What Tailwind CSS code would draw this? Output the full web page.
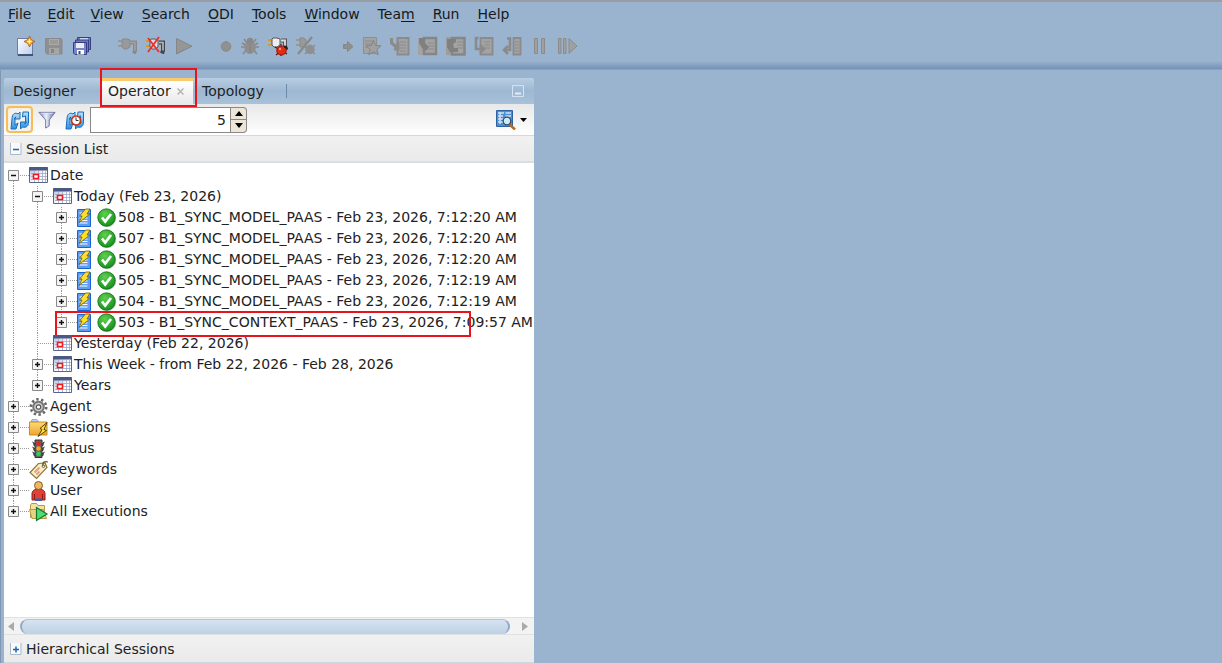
<!DOCTYPE html>
<html lang="en">
<head>
  <meta charset="UTF-8" />
  <meta name="viewport" content="width=device-width, initial-scale=1.0"/>
  <title>ODI Studio - Operator</title>
  <script src="https://cdn.jsdelivr.net/npm/@tailwindcss/browser@4"></script>
</head>
<body class="flex h-screen flex-col overflow-hidden bg-[#9ab3cf] font-['DejaVu_Sans',sans-serif] text-[14px] leading-[21px] text-[#222]">

  <!-- Icon sprites -->
  <svg class="absolute size-0" aria-hidden="true">
    <defs>
      <linearGradient id="gPage" x1="0" y1="0" x2="1" y2="1"><stop offset="0" stop-color="#fff"/><stop offset="1" stop-color="#b9cdec"/></linearGradient>
      <linearGradient id="gBlue" x1="0" y1="0" x2="0" y2="1"><stop offset="0" stop-color="#b8e2fa"/><stop offset="1" stop-color="#2f8fdd"/></linearGradient>
      <linearGradient id="gFunnel" x1="0" y1="0" x2="1" y2="0"><stop offset="0" stop-color="#7784b8"/><stop offset=".45" stop-color="#eef1fb"/><stop offset="1" stop-color="#5a68a3"/></linearGradient>
      <linearGradient id="gFolder" x1="0" y1="0" x2="0" y2="1"><stop offset="0" stop-color="#fbd97c"/><stop offset="1" stop-color="#f0a52c"/></linearGradient>
      <linearGradient id="gCalendar" x1="0" y1="0" x2="1" y2="1"><stop offset="0" stop-color="#a9b9dc"/><stop offset=".6" stop-color="#fff"/></linearGradient>
      <radialGradient id="gGreen" cx=".4" cy=".3" r=".8"><stop offset="0" stop-color="#5fd04e"/><stop offset="1" stop-color="#0c8a18"/></radialGradient>

      <symbol id="new" viewBox="0 0 20 20"><path d="M1.500 2.500h11l4 4v12.500h-15z" fill="url(#gPage)" stroke="#6d7c9f"/><path d="M2 19h15" stroke="#2b3a62" stroke-width="1.500"/><path d="M13.500 0l1.800 3.700 3.700 1.800-3.700 1.800-1.800 3.700-1.800-3.700L8 5.500l3.700-1.800z" fill="#f5a81c" stroke="#b35b0d" stroke-width=".8"/><path d="M13.500 3.200v4.600M11.200 5.500h4.600" stroke="#fff6a8" stroke-width="1.400"/></symbol>
      <symbol id="save" viewBox="0 0 20 20"><path d="M1.500 2.500h15.500l1 1v14.500H3l-1.500-1.500z" fill="#8f8f8f" stroke="#898989"/><path d="M5 3h10v6H5z" fill="#aaa"/><path d="M6 5h8M6 7h8" stroke="#8b8b8b"/><path d="M5 12h10v6H5z" fill="#a6a6a6"/><path d="M7 13h3v4H7z" fill="#858585"/></symbol>
      <symbol id="saveall" viewBox="0 0 20 20"><path d="M5.500 1.500h13v12h-13z" fill="#6f7bc0" stroke="#363f80"/><path d="M8 2h8v4H8z" fill="#cdd5f3"/><path d="M3.500 4h13v12h-13z" fill="#6f7bc0" stroke="#363f80"/><path d="M1.500 6.500h13v12H3L1.500 17z" fill="#7783cc" stroke="#363f80"/><path d="M4 7h8v5H4z" fill="#e9edfb"/><path d="M5 14h7v4.500H5z" fill="#fff"/><path d="M6.500 15h2v3h-2z" fill="#39437f"/></symbol>
      <symbol id="plug" viewBox="0 0 20 20"><path d="M0 5h5M0 10h5" stroke="#999" stroke-width="2"/><path d="M5 3h4l3 1v7l-3 2H6l-2-2V4z" fill="#999" stroke="#898989"/><path d="M12 6.500h5v8l-1 3" fill="none" stroke="#898989" stroke-width="4"/><path d="M12 6.500h5v8" fill="none" stroke="#a2a2a2" stroke-width="1.500"/></symbol>
      <symbol id="plugx" viewBox="0 0 20 20"><path d="M0 5h5M0 10h5" stroke="#d79a23" stroke-width="2"/><path d="M5 3h4l3 1v7l-3 2H6l-2-2V4z" fill="#ddd" stroke="#555"/><path d="M13 6.500h4v8l-1 3" fill="none" stroke="#444" stroke-width="4"/><path d="M13 6.500h4v8" fill="none" stroke="#bbb" stroke-width="1.600"/><path d="M2 2l11 14M13 1L2 16" stroke="#ee2c2c" stroke-width="1.800"/></symbol>
      <symbol id="play" viewBox="0 0 20 20"><path d="M2.500 2.500v15.500L18 10.200z" fill="#969696" stroke="#868686"/></symbol>
      <symbol id="dot" viewBox="0 0 20 20"><circle cx="10" cy="10.500" r="4.800" fill="#919191" stroke="#898989"/></symbol>
      <symbol id="bug" viewBox="0 0 20 20"><path d="M4 3l3 4M16 3l-3 4M1 11h18M3 18l4-5M17 18l-4-5M2 7l5 3M18 7l-5 3" stroke="#898989" stroke-width="1.600"/><ellipse cx="10" cy="11.500" rx="5.800" ry="6.500" fill="#8f8f8f"/><circle cx="10" cy="5" r="3.200" fill="#898989"/><path d="M10 8v9" stroke="#808080"/></symbol>
      <symbol id="plugbug" viewBox="0 0 20 20"><path d="M0 4h5M0 9h5" stroke="#d79a23" stroke-width="2"/><path d="M5 2h4l3 1v6l-3 2H6L4 9V3z" fill="#eee" stroke="#555"/><path d="M13 4.500h4v7" fill="none" stroke="#555" stroke-width="4"/><path d="M13 4.500h4v7" fill="none" stroke="#ddd" stroke-width="1.800"/><path d="M7 11l12 7M19 10L8 19M13 8v12" stroke="#5b1409" stroke-width="1.200"/><ellipse cx="13.500" cy="14.500" rx="4.800" ry="4.500" fill="#e62a12" stroke="#8d1707"/><circle cx="12" cy="13" r="1.200" fill="#ff9a7d"/><path d="M16 10.500a3 3 0 0 1 3 3" stroke="#222" stroke-width="2" fill="none"/></symbol>
      <symbol id="plugslash" viewBox="0 0 20 20"><path d="M0 4h4M0 9h4" stroke="#999" stroke-width="2"/><path d="M4 2h4l2 2v5l-3 2H4z" fill="#999" stroke="#898989"/><path d="M16 1L2 18" stroke="#898989" stroke-width="2.200"/><path d="M9 11l10 7M19 9L9 18" stroke="#898989" stroke-width="1.300"/><ellipse cx="14" cy="13.500" rx="4.700" ry="4.700" fill="#8f8f8f"/></symbol>
      <symbol id="arrow" viewBox="0 0 20 20"><path d="M5.500 8.500h4v-3l5.500 5-5.500 5v-3h-4z" fill="#8f8f8f" stroke="#868686"/></symbol>
      <symbol id="star" viewBox="0 0 20 20"><path d="M1.500 1.500h13v16h-13z" fill="#a3a3a3" stroke="#8f8f8f"/><path d="M3 5h9M3 8h7M3 11h5" stroke="#898989"/><path d="M11.500 4.500l2.100 5 5.400.4-4.100 3.500 1.300 5.300-4.700-2.900-4.700 2.900 1.300-5.300L4 9.900l5.400-.4z" fill="#a0a0a0" stroke="#858585"/></symbol>
      <symbol id="stepover" viewBox="0 0 20 20"><path d="M7.500 2h11v16.500h-11z" fill="#a3a3a3" stroke="#8b8b8b" stroke-width="2"/><path d="M10 6h6M10 9h6M10 12h6M10 15h6" stroke="#8b8b8b"/><path d="M1.500 2v5l5 4M8 6v7H4" fill="none" stroke="#8b8b8b" stroke-width="3"/></symbol>
      <symbol id="stepinto" viewBox="0 0 20 20"><path d="M0 2h6v17H0z" fill="#a3a3a3"/><path d="M6 2h12v16H6z" fill="#a3a3a3" stroke="#868686" stroke-width="2.500"/><path d="M10 7h6M10 10h6M10 13h6" stroke="#8b8b8b"/><path d="M1 2h6v5l4 4-3 4-4-3-3-5z" fill="#808080"/></symbol>
      <symbol id="stepout" viewBox="0 0 20 20"><path d="M0 1h6v18H0z" fill="#9d9d9d"/><path d="M6 2h12.500v16.500H6z" fill="#a3a3a3" stroke="#868686" stroke-width="2.500"/><path d="M11 6h6M11 9h6M11 12h6" stroke="#8b8b8b"/><path d="M1 3h9v3L7 8l1 4h4v4H4L1 11z" fill="#808080"/></symbol>
      <symbol id="stepend" viewBox="0 0 20 20"><path d="M6.500 2h12v16.500h-12z" fill="#a3a3a3" stroke="#8b8b8b" stroke-width="1.800"/><path d="M10 6h6M10 9h6M10 12h6" stroke="#8b8b8b"/><path d="M4.500 2H2v11h7M6 9l4 4-4 4" fill="none" stroke="#8b8b8b" stroke-width="2.600"/></symbol>
      <symbol id="stepback" viewBox="0 0 20 20"><path d="M11.500 2h7v16.500h-7z" fill="#a3a3a3" stroke="#8b8b8b" stroke-width="1.800"/><path d="M13 6h4M13 9h4M13 12h4M13 15h4" stroke="#8b8b8b"/><path d="M5 2.500h3V14H3M6 10l-4 4 4 4" fill="none" stroke="#8b8b8b" stroke-width="2.600"/></symbol>
      <symbol id="pause" viewBox="0 0 20 20"><path d="M4.500 2.500h3v15h-3zM11.500 2.500h3v15h-3z" fill="#a0a0a0" stroke="#8b8b8b"/></symbol>
      <symbol id="resume" viewBox="0 0 20 20"><path d="M.5 2.500h2.500v15H.5zM5.500 2.500H8v15H5.500zM11 2.500l8 7.500-8 7.500z" fill="#a0a0a0" stroke="#8b8b8b"/></symbol>

      <symbol id="refresh" viewBox="0 0 20 20"><path d="M2 9c0-5 3-7 6-5l2-2v7H4l2-2c-1 0-1 1-1 3v5l3-2-2 6H1z" fill="url(#gBlue)" stroke="#1a6cc0" stroke-linejoin="round"/><path d="M13 2h5.500v10c0 4-2 6-6 5l-2 2v-7h6l-2 2c1 0 1-1 1-3V6l-3 1z" fill="url(#gBlue)" stroke="#1a6cc0" stroke-linejoin="round"/></symbol>
      <symbol id="funnel" viewBox="0 0 20 20"><path d="M1 1.500h18L12.500 10v6.500l-4 2.500v-9z" fill="url(#gFunnel)" stroke="#67719f"/><path d="M3 2.500h14" stroke="#dfe4f6"/></symbol>
      <symbol id="clock" viewBox="0 0 20 20"><circle cx="11" cy="10.500" r="4.500" fill="#fff" stroke="#c5361b" stroke-width="1.700"/><path d="M11 7.500v3h2.500" fill="none" stroke="#333"/></symbol>
      <symbol id="find" viewBox="0 0 20 20"><path d="M.5.500h16v16H.5z" fill="#4f8fd0" stroke="#2d62a5"/><path d="M2 3h6M9.500 3H15M2 6h5M9.500 6H15M2 9h5M2 12h6M4 2v12" stroke="#cfe2f6" stroke-width="1.500"/><path d="M13 14l6 5.500" stroke="#b56d22" stroke-width="2.500"/><circle cx="11" cy="11" r="3.800" fill="#cdeaf8" stroke="#31506f" stroke-width="1.300"/></symbol>

      <symbol id="calendar" viewBox="0 0 20 20"><path d="M.5 1.500h18v15H.5z" fill="url(#gCalendar)" stroke="#59658f"/><path d="M.5 1h18v3.500H.5z" fill="#4c5884"/><path d="M5.500 5v11M9.500 5v11M13.500 5v11M16.500 5v11M2 7.500h16M2 10.500h16M2 13.500h16" stroke="#9aa7c8" stroke-width=".8"/><path d="M4.500 8.500h5v4h-5z" fill="#fff" stroke="#f01818" stroke-width="1.600"/></symbol>
      <symbol id="session" viewBox="0 0 20 20"><path d="M.5 1.500h13v17H.5z" fill="#5d9df5" stroke="#1762d6"/><path d="M2.500 5h6M2.500 7.500h8M2.500 10h8M2.500 12.500h8M2.500 15h8" stroke="#fff"/><path d="M8.500 1h4.500L10 6h3L2 14.500l3-6.500H2.500z" fill="#fbdf2a" stroke="#6d5a12" stroke-width=".8"/></symbol>
      <symbol id="ok" viewBox="0 0 20 20"><circle cx="10.200" cy="10.200" r="9" fill="#8d9a8d" opacity=".5"/><circle cx="9.500" cy="9.500" r="8.700" fill="url(#gGreen)" stroke="#0c7014" stroke-width=".8"/><path d="M5 9.500l3.200 4L14 6" fill="none" stroke="#fff" stroke-width="2.700"/></symbol>
      <symbol id="agent" viewBox="0 0 20 20"><circle cx="9.500" cy="10" r="7.700" fill="none" stroke="#666" stroke-width="2.600" stroke-dasharray="2.400 2.430"/><circle cx="9.500" cy="10" r="5.300" fill="#ccc" stroke="#777" stroke-width="2"/><circle cx="9.500" cy="10" r="2.200" fill="#fff" stroke="#555" stroke-width="1.200"/></symbol>
      <symbol id="sessions" viewBox="0 0 20 20"><path d="M2 3.500l1-2h5l1.500 2z" fill="#bcd3f4" stroke="#86a2cf" stroke-width=".8"/><path d="M.5 4h17.500v13H.5z" fill="url(#gFolder)" stroke="#d38a1c"/><path d="M18 4.500L11 10.500l2 1-4 7 8.500-6-2.500-1 3-7" fill="#ffe333" stroke="#3c3210" stroke-width=".9"/></symbol>
      <symbol id="status" viewBox="0 0 20 20"><path d="M3.500 3l3 2v2l-2-1M3.500 8l3 2v2l-2-1M3.500 13l3 2v2l-2-1M15.500 3l-3 2v2l2-1M15.500 8l-3 2v2l2-1M15.500 13l-3 2v2l2-1" fill="#555" stroke="#444"/><path d="M6 1h7v17.500H6z" fill="#666" stroke="#333"/><circle cx="9.500" cy="4.200" r="2.300" fill="#f02020"/><circle cx="9.500" cy="9.500" r="2.300" fill="#f7a81b"/><circle cx="9.500" cy="14.800" r="2.300" fill="#2ad15c"/></symbol>
      <symbol id="keywords" viewBox="0 0 20 20"><path d="M9.500 3.500L16 3l2 4.500L7.500 18.500 1 12.500z" fill="#f8edc8" stroke="#8b7636" stroke-width="1.200"/><path d="M5.500 12.500l5-5M7.500 14.500l3-3" stroke="#ef9c86" stroke-width="2"/><circle cx="14.500" cy="6.200" r="1.300" fill="#fff" stroke="#6d5c2a"/><path d="M14 6c-1-4 2-5 5-4" fill="none" stroke="#6b5a2b" stroke-width="1.200"/></symbol>
      <symbol id="user" viewBox="0 0 20 20"><path d="M3 19v-6c0-3 2-5 6.500-5s6.500 2 6.500 5v6z" fill="#e23f36" stroke="#8c1b16"/><path d="M5.500 13v5.500M13.500 13v5.500" stroke="#8c1b16"/><path d="M6 17.500h7V20H6z" fill="#3660a8"/><circle cx="9.500" cy="4.500" r="4" fill="#e9b964" stroke="#8b5e1f"/></symbol>
      <symbol id="executions" viewBox="0 0 20 20"><path d="M1.500 15.500V3l1-1.500h5L9 3.500h6.500v12z" fill="#f3e2a2" stroke="#b79a45"/><path d="M.5 7.500h14l3 9H3z" fill="#e9d284" stroke="#b79a45"/><path d="M7.500 5.500v13l10.500-6.500z" fill="#4fdc72" stroke="#13762f" stroke-width="1.200"/></symbol>
    </defs>
  </svg>

  <header class="border-t-2 border-[#989da3]">
    <!-- Menu bar -->
    <nav class="flex gap-[18px] px-2 pt-0.5 text-[#151a20]">
      <div class="flex gap-4">
        <a href="#"><u class="underline-offset-2">F</u>ile</a>
        <a href="#"><u class="underline-offset-2">E</u>dit</a>
        <a href="#"><u class="underline-offset-2">V</u>iew</a>
      </div>
      <a href="#"><u class="underline-offset-2">S</u>earch</a>
      <a href="#"><u class="underline-offset-2">O</u>DI</a>
      <a href="#"><u class="underline-offset-2">T</u>ools</a>
      <a href="#"><u class="underline-offset-2">W</u>indow</a>
      <a href="#">Tea<u class="underline-offset-2">m</u></a>
      <a href="#"><u class="underline-offset-2">R</u>un</a>
      <a href="#"><u class="underline-offset-2">H</u>elp</a>
    </nav>

    <!-- Toolbar -->
    <div id="toolbar" class="flex h-9 items-center gap-[18px] px-3 pt-1.5"></div>
    <div class="h-2 bg-linear-to-b from-[#9ab3cf] to-[#7492b6]"></div>
    <div class="h-px bg-[#87a3c4]"></div>
  </header>

  <main class="flex min-h-0 flex-1 border-l border-[#7f97b3] pt-2 pl-[3px]">
    <section class="flex w-[530px] flex-col overflow-hidden rounded-t bg-white">

      <!-- Tabs -->
      <div class="flex h-[26px] items-stretch bg-linear-to-b from-[#b8cde2] via-[#9db8d3] to-[#a9c1da]" role="tablist">
        <button class="w-[97px] pl-[9px] text-left" role="tab">Designer</button>
        <div class="flex w-[92px] items-center gap-1.5 border-t-[3px] border-[#fbc96f] bg-linear-to-b from-white to-[#e9e9e9] pb-0.5 pl-[7px]">
          <button role="tab" aria-selected="true">Operator</button>
          <button aria-label="Close tab"><svg class="size-[7px]" viewBox="0 0 7 7"><path d="M.5.500l6 6M6.500.500l-6 6" stroke="#b5b5b5" stroke-width="1.500"/></svg></button>
          <div class="pointer-events-none fixed top-[68px] left-[100px] h-[39px] w-[97px] border-2 border-[#e8141b]"></div>
        </div>
        <button class="pl-[9px] text-left" role="tab">Topology</button>
        <div class="my-1.5 ml-[22px] w-px bg-[#6c8bab]"></div>
        <button class="mr-2.5 ml-auto" aria-label="Minimize"><svg class="size-3" viewBox="0 0 12 12"><path d="M.5.500h11v11H.5z" fill="none" stroke="#d5e2ef"/><path d="M3 7.500h6v2H3z" fill="#e2ebf4"/></svg></button>
      </div>

      <!-- Panel toolbar -->
      <div class="flex h-8 items-center border-b border-[#d3d8dd] bg-linear-to-b from-[#e8e8e8] to-white pr-[7px] pl-0.5">
        <button class="flex size-[27px] items-center justify-center rounded border-2 border-[#f8bd58] bg-[#f4f1ea]" aria-label="Refresh"><svg class="size-5"><use href="#refresh"/></svg></button>
        <button class="flex w-7 justify-center" aria-label="Filter"><svg class="size-[18px]"><use href="#funnel"/></svg></button>
        <button class="flex w-7 justify-center" aria-label="Auto refresh"><svg class="size-5"><use href="#refresh"/><use href="#clock"/></svg></button>
        <input class="ml-px h-[26px] w-[141px] border border-[#888] bg-white pr-1 text-right" type="text" inputmode="numeric" value="5" aria-label="Refresh rate" />
        <div class="flex h-[26px] w-4 flex-col rounded-r border border-l-0 border-[#888] bg-[#ece6d8]">
          <button class="flex flex-1 items-center justify-center border-b border-[#888]" aria-label="Increase"><svg class="h-[5px] w-2" viewBox="0 0 8 5"><path d="M4 0l4 5H0z"/></svg></button>
          <button class="flex flex-1 items-center justify-center" aria-label="Decrease"><svg class="h-[5px] w-2" viewBox="0 0 8 5"><path d="M0 0h8L4 5z"/></svg></button>
        </div>
        <button class="ml-auto" aria-label="Find"><svg class="size-5"><use href="#find"/></svg></button>
        <button class="ml-1" aria-label="Find options"><svg class="h-1 w-[7px]" viewBox="0 0 7 4"><path d="M0 0h7L3.500 4z"/></svg></button>
      </div>

      <h2 class="flex h-[27px] items-center gap-1 border-b-2 border-[#d9dee3] bg-linear-to-b from-[#f1f1f1] to-[#eaeaea] pt-px pl-1.5">
        <button aria-label="Collapse Session List"><svg class="size-3" viewBox="0 0 12 12"><path d="M.5 0v11.500H11V0" fill="#f8fafc" stroke="#a9b9ca"/><path d="M3 6.500h6" stroke="#1f63a8" stroke-width="1.500"/></svg></button>
        Session List
      </h2>

      <!-- Session tree -->
      <ul id="tree" class="min-h-0 flex-1 overflow-hidden pt-0.5 pl-px"></ul>

      <!-- Horizontal scrollbar -->
      <div class="flex h-[18px] items-center border-y border-[#dfe2e5] bg-[#f3f3f3] px-1">
        <button class="w-3" aria-label="Scroll left"><svg class="h-[9px] w-1.5" viewBox="0 0 6 9"><path d="M6 0v9L0 4.500z" fill="#aaa"/></svg></button>
        <div class="h-[15px] flex-1 rounded-full border-x-2 border-t border-[#8fa9c7] border-t-[#b3c5d8] bg-linear-to-b from-[#d6e3f0] to-[#bed1e6]"></div>
        <button class="ml-3 w-2" aria-label="Scroll right"><svg class="h-[9px] w-1.5" viewBox="0 0 6 9"><path d="M0 0v9l6-4.500z" fill="#aaa"/></svg></button>
      </div>

      <h2 class="flex h-7 items-center gap-1 border-b border-[#cfd8e1] bg-linear-to-b from-[#f1f1f1] to-[#eaeaea] pt-px pl-1.5">
        <button aria-label="Expand Hierarchical Sessions"><svg class="size-3" viewBox="0 0 12 12"><path d="M.5 0v11.500H11V0" fill="#f8fafc" stroke="#a9b9ca"/><path d="M3 6.500h6M6 3.500v6" stroke="#1f63a8" stroke-width="1.500"/></svg></button>
        Hierarchical Sessions
      </h2>
    </section>
  </main>

  <script>
    const groups = [
      ['new', 'save', 'saveall'],
      ['plug', 'plugx', 'play'],
      ['dot', 'bug', 'plugbug', 'plugslash'],
      ['arrow', 'star', 'stepover', 'stepinto', 'stepout', 'stepend', 'stepback', 'pause', 'resume'],
    ];
    const narrow = ['dot', 'arrow'];

    document.getElementById('toolbar').innerHTML = groups.map(group =>
      '<div class="flex">' + group.map(name =>
        `<button class="flex ${narrow.includes(name) ? 'w-5' : 'w-7'} justify-center" aria-label="${name}"><svg class="size-5"><use href="#${name}"/></svg></button>`
      ).join('') + '</div>'
    ).join('');

    // guides: one letter per level
    // "|" line passing by, "+" / "-" handle, "t" branch without handle,
    // "f" first open root, "l" last handle of its level
    const rows = [
      ['f', 'calendar', 'Date'],
      ['|-', 'calendar', 'Today (Feb 23, 2026)'],
      ['||+', 'session', '508 - B1_SYNC_MODEL_PAAS - Feb 23, 2026, 7:12:20 AM'],
      ['||+', 'session', '507 - B1_SYNC_MODEL_PAAS - Feb 23, 2026, 7:12:20 AM'],
      ['||+', 'session', '506 - B1_SYNC_MODEL_PAAS - Feb 23, 2026, 7:12:20 AM'],
      ['||+', 'session', '505 - B1_SYNC_MODEL_PAAS - Feb 23, 2026, 7:12:19 AM'],
      ['||+', 'session', '504 - B1_SYNC_MODEL_PAAS - Feb 23, 2026, 7:12:19 AM'],
      ['||l', 'session', '503 - B1_SYNC_CONTEXT_PAAS - Feb 23, 2026, 7:09:57 AM', true],
      ['|t', 'calendar', 'Yesterday (Feb 22, 2026)'],
      ['|+', 'calendar', 'This Week - from Feb 22, 2026 - Feb 28, 2026'],
      ['|l', 'calendar', 'Years'],
      ['+', 'agent', 'Agent'],
      ['+', 'sessions', 'Sessions'],
      ['+', 'status', 'Status'],
      ['+', 'keywords', 'Keywords'],
      ['+', 'user', 'User'],
      ['l', 'executions', 'All Executions'],
    ];

    function guide(kind) {
      const span = kind === 'f' ? 'top-2.5 bottom-0' : kind === 'l' ? 'top-0 bottom-2.5' : 'top-0 bottom-0';
      let html = `<i class="absolute left-2 ${span} border-l border-dotted border-[#999]"></i>`;
      if (kind !== '|') {
        html += '<i class="absolute top-2.5 right-0 left-2 border-t border-dotted border-[#999]"></i>';
      }
      if ('+-fl'.includes(kind)) {
        const cross = '+l'.includes(kind) ? 'M3 5.500h5M5.500 3v5' : 'M3 5.500h5';
        html += `<button class="absolute top-[5px] left-[3px]" aria-label="Toggle"><svg class="size-[11px]" viewBox="0 0 11 11"><path d="M.5.500h10v10H.5z" fill="#f4f4f4" stroke="#8a8a8a"/><path d="${cross}" stroke="#111" stroke-width="1.400"/></svg></button>`;
      }
      return `<span class="relative h-[21px] w-6 shrink-0">${html}</span>`;
    }

    document.getElementById('tree').innerHTML = rows.map(([guides, icon, label, marked]) => `
      <li class="relative flex h-[21px] items-center whitespace-nowrap">
        ${[...guides].map(guide).join('')}
        <svg class="size-5 shrink-0"><use href="#${icon}"/></svg>
        ${icon === 'session' ? '<svg class="size-5 shrink-0"><use href="#ok"/></svg>' : ''}
        <span class="ml-px">${label}</span>
        ${marked ? '<div class="pointer-events-none absolute -top-px left-[50px] h-[26px] w-[416px] border-2 border-[#e8141b]"></div>' : ''}
      </li>`).join('');
  </script>
</body>
</html>
